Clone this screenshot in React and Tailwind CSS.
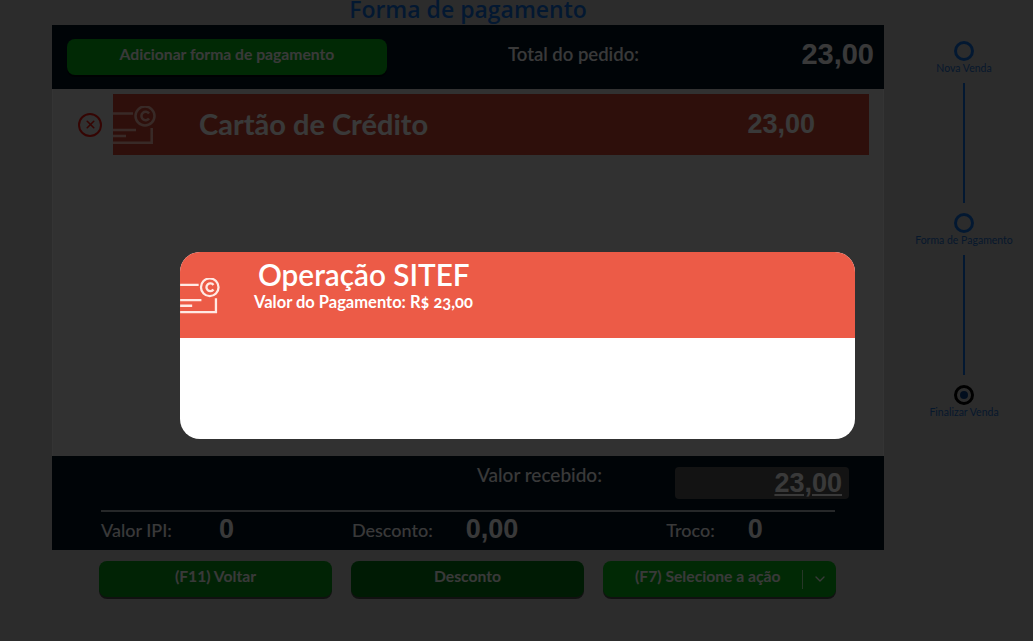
import React from 'react';
import { ChevronDown, X } from 'lucide-react';

const RALE = "font-['Lato','Noto_Sans',sans-serif]";
const NUM = "font-['Liberation_Sans',Arial,sans-serif] font-bold";

function CardIcon({ className }) {
  return (
    <svg viewBox="0 0 44 40" fill="none" stroke="currentColor" strokeWidth="2.5" className={className}>
      <circle cx="32" cy="10" r="9.5" />
      <path d="M36 7.5a4.2 4.2 0 1 0 0 5" />
      <path d="M0 7.5h20M0 24h23M0 30h13M0 36.8h38.7V22" />
    </svg>
  );
}

function Step({ label, active }) {
  return (
    <div className="flex flex-col items-center">
      <span className={`flex h-5 w-5 items-center justify-center rounded-full border-[3px] ${active ? 'border-black' : 'border-[#0f62c4]'}`}>
        {active && <span className="h-2 w-2 rounded-full bg-[#0b3a78]" />}
      </span>
      <span className={`${RALE} whitespace-nowrap text-[10.5px] leading-[15px] text-[#1b5fb0]`}>{label}</span>
    </div>
  );
}

function ActionButton({ children, className = '' }) {
  return (
    <button
      type="button"
      className={`${RALE} flex h-9 items-center justify-center rounded-lg pb-1 text-[15.7px] font-bold text-[#e4e4e4] shadow-[0_2px_0_rgba(0,0,0,0.6)] ${className}`}
    >
      {children}
    </button>
  );
}

export default function App() {
  return (
    <div className="relative flex h-[641px] w-[1033px] overflow-hidden bg-[#b0b0b0]">
      <div className="w-[884px] shrink-0 pl-[52px]">
        <div className="flex h-[25px] items-end justify-center">
          <h1 className="font-['Open_Sans',sans-serif] text-[23px] font-semibold leading-[32px] text-[#0f62c4]">Forma de pagamento</h1>
        </div>

        <div className="w-[832px]">
          <div className="flex h-[64px] items-center bg-[#00101e] pl-[15px] pr-[10px]">
            <ActionButton className="h-8 w-[320px] bg-[#04a315]">Adicionar forma de pagamento</ActionButton>
            <span className={`${RALE} ml-[121px] mb-1 text-[18.5px] font-semibold text-[#e4e4e4]`}>Total do pedido:</span>
            <span className={`${NUM} ml-auto mb-1 text-[29px] text-[#e4e4e4]`}>23,00</span>
          </div>

          <div className="h-[367px] border-x border-[#d0d0d0] bg-[#c2c2c2] pt-[5px]">
            <div className="flex h-[61px] items-center">
              <div className="flex w-[60px] justify-end pr-[11px]">
                <span className="flex h-6 w-6 items-center justify-center rounded-full border-2 border-[#d3170f] text-[#d3170f]">
                  <X size={13} strokeWidth={3} />
                </span>
              </div>
              <div className="flex h-full w-[756px] items-center bg-[#b93f2c] text-[#e4e4e4]">
                <CardIcon className="mt-[3px] h-10 w-11 shrink-0 text-[#dfa89d]" />
                <span className={`${RALE} ml-[42px] mb-[2px] text-[29px] font-bold`}>Cartão de Crédito</span>
                <span className={`${NUM} ml-auto mr-[54px] text-[27px]`}>23,00</span>
              </div>
            </div>
          </div>

          <div className="h-[94px] bg-[#00101e] px-[49px]">
            <div className="flex h-[54px] items-start">
              <span className={`${RALE} ml-[376px] mt-[5px] text-[19px] font-medium text-[#e4e4e4]`}>Valor recebido:</span>
              <div className={`${NUM} ml-auto mr-[-14px] mt-[11px] flex h-8 w-[174px] items-center justify-end rounded bg-[#4c4c4c] pr-[7px] text-[27px] text-[#e4e4e4] underline`}>23,00</div>
            </div>
            <div className="flex h-[40px] items-center border-t-2 border-white/60 pb-[3px] text-[#e4e4e4]">
              <span className={`${RALE} text-lg font-medium`}>Valor IPI:</span>
              <span className={`${NUM} ml-[47px] text-[27px]`}>0</span>
              <span className={`${RALE} ml-[118px] text-lg font-medium`}>Desconto:</span>
              <span className={`${NUM} ml-[33px] text-[27px]`}>0,00</span>
              <span className={`${RALE} ml-[148px] text-lg font-medium`}>Troco:</span>
              <span className={`${NUM} ml-[33px] text-[27px]`}>0</span>
            </div>
          </div>
        </div>

        <div className="mt-[11px] flex gap-[19px] pl-[47px]">
          <ActionButton className="w-[233px] bg-[#048a14]">(F11) Voltar</ActionButton>
          <ActionButton className="w-[233px] bg-[#036d11]">Desconto</ActionButton>
          <ActionButton className="w-[233px] bg-[#04a315]">
            <span className="ml-[32px] flex-1 whitespace-nowrap text-left">(F7) Selecione a ação</span>
            <span className="mt-1 flex h-[19px] w-[34px] shrink-0 items-center justify-center border-l border-white/60">
              <ChevronDown size={16} />
            </span>
          </ActionButton>
        </div>
      </div>

      <div className="flex flex-1 flex-col items-center pl-[11px] pt-[41px]">
        <Step label="Nova Venda" />
        <span className="mb-[10px] mt-[7px] h-[120px] w-[2px] bg-[#0f62c4]" />
        <Step label="Forma de Pagamento" />
        <span className="mb-[10px] mt-[7px] h-[120px] w-[2px] bg-[#0f62c4]" />
        <Step label="Finalizar Venda" active />
      </div>

      {/* modal por cima da tela */}
      <div className="absolute inset-0 bg-black/75">
        <div className="absolute left-[180px] top-[252px] h-[187px] w-[675px] overflow-hidden rounded-[20px] bg-white">
          <div className="flex h-[86px] bg-[#ec5b47] text-white">
            <CardIcon className="mt-[26px] h-[37px] w-[41px] shrink-0 text-[#ffe9e4]" />
            <div className="ml-[37px] pt-[5px]">
              <h2 className={`${RALE} whitespace-nowrap text-[29.7px] font-semibold leading-[36px]`}>Operação SITEF</h2>
              <p className={`${RALE} -ml-1 mt-[2px] whitespace-nowrap text-[16.5px] font-bold leading-[15px] oldstyle-nums`}>Valor do Pagamento: R$ 23,00</p>
            </div>
          </div>
        </div>
      </div>
    </div>
  );
}
